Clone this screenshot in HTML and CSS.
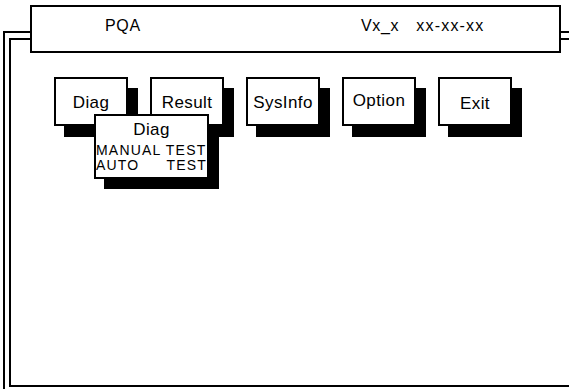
FILE: index.html
```html
<!DOCTYPE html>
<html lang="en">
<head>
    <meta charset="UTF-8">
    <meta name="viewport" content="width=device-width, initial-scale=1.0">
    <title>PQA</title>
    <link rel="stylesheet" href="styles.css">
</head>
<body>
    <div class="screen">
        <div class="title-bar">
            <span class="title">PQA</span>
            <span class="version">Vx_x</span>
            <span class="date">xx-xx-xx</span>
        </div>

        <div class="frame-outer">
            <div class="frame-inner">
                <ul class="menu">
                    <li class="menu-item">
                        <span class="label">Diag</span>
                        <div class="dropdown">
                            <div class="dropdown-title">Diag</div>
                            <div class="dropdown-row">MANUAL TEST</div>
                            <div class="dropdown-row spread"><span>AUTO</span><span>TEST</span></div>
                        </div>
                    </li>
                    <li class="menu-item"><span class="label">Result</span></li>
                    <li class="menu-item"><span class="label">SysInfo</span></li>
                    <li class="menu-item"><span class="label up">Option</span></li>
                    <li class="menu-item"><span class="label down">Exit</span></li>
                </ul>
            </div>
        </div>
    </div>
</body>
</html>
```

FILE: styles.css
```css
body {
    margin: 0;
    padding: 0;
    background-color: #fff;
    color: #000;
    font-family: "Liberation Sans", Arial, sans-serif;
    overflow: hidden;
}
.screen {
    position: relative;
    width: 569px;
    height: 389px;
    box-sizing: border-box;
    padding: 31px 0 0 3px;
}
/* header box sits over the frame lines */
.title-bar {
    position: absolute;
    left: 30px;
    top: 5px;
    width: 531px;
    height: 48px;
    box-sizing: border-box;
    border: 2px solid #000;
    background-color: #fff;
    display: flex;
    align-items: flex-start;
    padding-top: 10px;
    font-size: 16px;
    letter-spacing: 0.7px;
    z-index: 2;
}
.title {
    margin-left: 73px;
}
.version {
    margin-left: 220px;
}
.date {
    margin-left: 17px;
    letter-spacing: 1.2px;
}
.frame-outer {
    height: 358px;
    box-sizing: border-box;
    border-top: 2px solid #000;
    border-left: 2px solid #000;
    padding: 5px 0 0 4px;
}
.frame-inner {
    height: 349px;
    box-sizing: border-box;
    border-top: 2px solid #000;
    border-left: 2px solid #000;
    border-bottom: 2px solid #000;
}
.menu {
    list-style-type: none;
    margin: 0;
    padding: 37px 0 0 43px;
    display: flex;
    gap: 22px;
}
.menu-item {
    position: relative;
    width: 74px;
    height: 49px;
    box-sizing: border-box;
    border: 2px solid #000;
    background-color: #fff;
    box-shadow: 10px 11px 0 #000;
    display: flex;
    justify-content: center;
    padding-top: 14px;
    font-size: 17px;
    letter-spacing: 0.4px;
}
.label.up {
    margin-top: -2px;
}
.label.down {
    margin-top: 1px;
}
.dropdown {
    position: absolute;
    left: 38px;
    top: 35px;
    width: 115px;
    height: 65px;
    box-sizing: border-box;
    border: 2px solid #000;
    background-color: #fff;
    box-shadow: 10px 10px 0 #000;
    z-index: 1;
    padding-top: 4px;
}
.dropdown-title {
    text-align: center;
    font-size: 17px;
    line-height: 20px;
    margin-bottom: 3px;
}
.dropdown-row {
    font-size: 14px;
    line-height: 15px;
    letter-spacing: 1.2px;
    white-space: nowrap;
}
.dropdown-row.spread {
    display: flex;
    justify-content: space-between;
}
```
